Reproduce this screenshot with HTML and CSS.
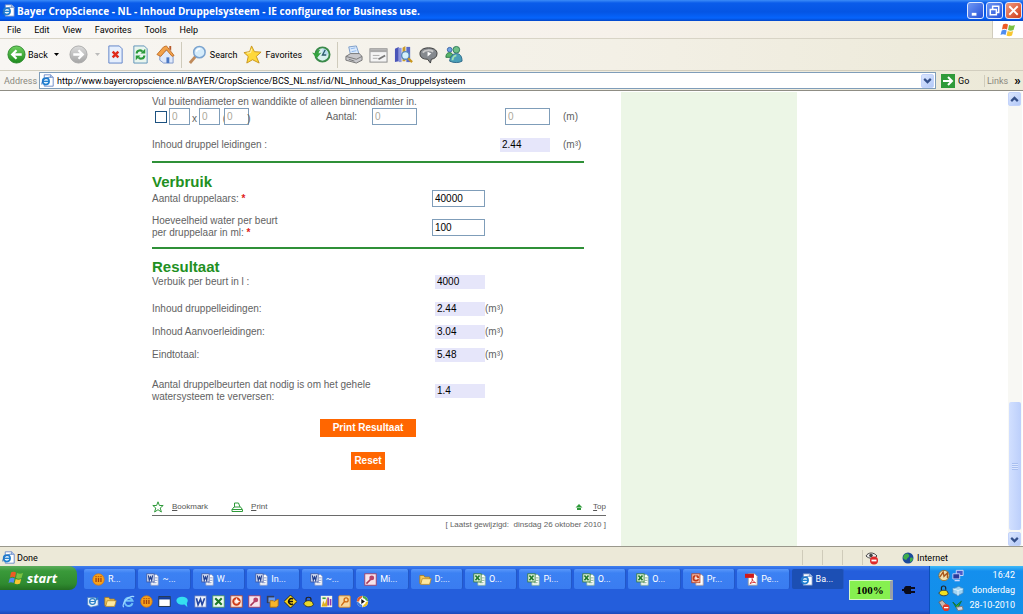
FILE: index.html
```html
<!DOCTYPE html>
<html lang="nl">
<head>
<meta charset="utf-8">
<title>Bayer CropScience - NL - Inhoud Druppelsysteem</title>
<link rel="stylesheet" href="styles.css">
</head>
<body>
<svg class="defs" aria-hidden="true">
  <defs>
    <linearGradient id="gGreen" x1="0" y1="0" x2="0" y2="1"><stop offset="0" stop-color="#6fd060"/><stop offset="1" stop-color="#1c8a1c"/></linearGradient>
    <linearGradient id="gGrey" x1="0" y1="0" x2="0" y2="1"><stop offset="0" stop-color="#dcdcdc"/><stop offset="1" stop-color="#a4a4a4"/></linearGradient>
  </defs>
  <symbol id="ie" viewBox="0 0 16 16"><path d="M4 1h8l3 3v11H4z" fill="#fff" stroke="#5a7cc0"/><path d="M12 1v3h3" fill="#cfe0fa" stroke="#5a7cc0"/><circle cx="6" cy="9" r="4" fill="#e8f4ff" stroke="#1f7fd0" stroke-width="2"/><path d="M2 9h8" stroke="#1f7fd0" stroke-width="1.6"/><path d="M1 13C0 9 7 3 12 4" fill="none" stroke="#2a66b8"/></symbol>
  <symbol id="word" viewBox="0 0 16 16"><path d="M6 2h7l2 2v11H6z" fill="#fff" stroke="#8a9cc8"/><path d="M8 12h5M11 6h3M11 9h3" stroke="#6f86c0"/><rect x="1" y="1" width="9" height="10" fill="#e6ecfa" stroke="#3a55a0"/><path d="M3 3l1 6 1.500-4 1.500 4 1-6" fill="none" stroke="#22408e" stroke-width="1.500"/></symbol>
  <symbol id="excel" viewBox="0 0 16 16"><path d="M6 2h7l2 2v11H6z" fill="#fff" stroke="#8ab89a"/><path d="M8 12h5M11 6h3M11 9h3" stroke="#6aa07a"/><rect x="1" y="1" width="9" height="10" fill="#dff0dc" stroke="#2f7a32"/><path d="M3 3l5 6M8 3l-5 6" stroke="#1f7a2a" stroke-width="2"/></symbol>
  <symbol id="ppt" viewBox="0 0 16 16"><path d="M6 2h7l2 2v11H6z" fill="#fff" stroke="#b8a09a"/><rect x="1" y="1" width="10" height="11" fill="#f3b9a4" stroke="#b84020"/><circle cx="6" cy="6.500" r="3" fill="none" stroke="#c23a18" stroke-width="2"/><path d="M6 3v4h4" stroke="#fff" fill="none"/></symbol>
  <symbol id="access" viewBox="0 0 16 16"><rect x="1" y="1" width="14" height="14" fill="#f6e4ec" stroke="#a8385a"/><circle cx="9.500" cy="6" r="3" fill="#b8426a"/><path d="M8 8l-5 5" stroke="#a8385a" stroke-width="2"/></symbol>
  <symbol id="folder" viewBox="0 0 16 16"><path d="M1 3h5l1 2h6v8H1z" fill="#f4c95a" stroke="#a87a20"/><path d="M4 7h11l-2 7H2z" fill="#ffe9a0" stroke="#b88a2a"/></symbol>
  <symbol id="pdf" viewBox="0 0 16 16"><path d="M4 1h8l3 3v11H4z" fill="#fff" stroke="#999"/><path d="M0 1h11v5H0z" fill="#d01818"/><path d="M6 13c2-1 4-5 3-6s-1 2 4 5c-2-1-5 0-7 1z" fill="none" stroke="#d01818"/></symbol>
  <symbol id="notes" viewBox="0 0 16 16"><circle cx="8" cy="8" r="7" fill="#f7a21c" stroke="#d9780c"/><path d="M5 6v5M8 6v5M11 6v5" stroke="#a3410a" stroke-width="1.600"/><path d="M4 4.500h2M7 4.500h2M10 4.500h2" stroke="#a3410a"/></symbol>
  <symbol id="flag" viewBox="0 0 16 16"><path d="M3 2.500C5 1 7 2 8 2.500L7 7.500C5 6.500 3.500 6.500 2 7.500z" fill="#ee5a24"/><path d="M9 3c2 1 4 1 6 0l-1.500 5c-2 1-4 1-5.500 0z" fill="#7cc142"/><path d="M1.700 8.500c2-1 3.500-1 5 0L5.500 13C4 12 2 12 .5 13z" fill="#4f8df0"/><path d="M7.700 9c2 1 3.700 1 5.500 0L12 13.500c-2 1-4 1-5.500 0z" fill="#f8c630"/></symbol>
</svg>

<header class="titlebar">
  <svg class="i13"><use href="#ie"/></svg>
  <h1 class="title">Bayer CropScience - NL - Inhoud Druppelsysteem - IE configured for Business use.</h1>
  <button class="win" aria-label="Minimaliseren"><svg viewBox="0 0 16 16"><path d="M4 12h5" stroke="#fff" stroke-width="3"/></svg></button>
  <button class="win" aria-label="Herstellen"><svg viewBox="0 0 16 16"><path d="M6 6V3.500h6.500V10H10M3.500 7H10v5.500H3.500z" fill="none" stroke="#fff" stroke-width="1.600"/></svg></button>
  <button class="win win-close" aria-label="Sluiten"><svg viewBox="0 0 16 16"><path d="M3.500 3.500l9 9M12.500 3.500l-9 9" stroke="#fff" stroke-width="2"/></svg></button>
</header>

<nav class="menubar">
  <button>File</button><button>Edit</button><button>View</button><button>Favorites</button><button>Tools</button><button>Help</button>
  <span class="throbber"><svg class="i16"><use href="#flag"/></svg></span>
</nav>

<div class="toolbar">
  <button class="tool back"><svg class="i20" viewBox="0 0 20 20"><circle cx="10" cy="10" r="9" fill="url(#gGreen)" stroke="#2b8a2b"/><path d="M15.500 10H6M10 5.500L5.500 10l4.500 4.500" fill="none" stroke="#fff" stroke-width="2.400"/></svg>Back<svg class="caret" viewBox="0 0 5 3"><path d="M0 0h5L2.500 3z" fill="#000"/></svg></button>
  <button class="tool forward" aria-label="Forward"><svg class="i20" viewBox="0 0 20 20"><circle cx="10" cy="10" r="9" fill="url(#gGrey)" stroke="#aaa"/><path d="M4.500 10H14M10 5.500l4.500 4.500-4.500 4.500" fill="none" stroke="#fff" stroke-width="2.400"/></svg><svg class="caret" viewBox="0 0 5 3"><path d="M0 0h5L2.500 3z" fill="#bbb"/></svg></button>
  <button class="tool" aria-label="Stop"><svg class="i20" viewBox="0 0 20 20"><path d="M3 1h11l3 3v15H3z" fill="#e6effd" stroke="#5f83c8"/><path d="M7 7l6 6M13 7l-6 6" stroke="#e02a1c" stroke-width="2.600"/></svg></button>
  <button class="tool" aria-label="Refresh"><svg class="i20" viewBox="0 0 20 20"><path d="M3 1h11l3 3v15H3z" fill="#e9f5ee" stroke="#5f93b8"/><path d="M6 9c0-4 5-4 6-2M14 11c0 4-5 4-6 2" fill="none" stroke="#2a9a3a" stroke-width="2.200"/><path d="M10 9h5V4zM10 11H5v5z" fill="#2a9a3a"/></svg></button>
  <button class="tool" aria-label="Home"><svg class="i20" viewBox="0 0 20 20"><path d="M4 10l8-5 6 6v8H8l-4-3z" fill="#dfe9fb" stroke="#7d97c9"/><path d="M1 10L8 2l3-1 8 10-2 1-6-7-6 7z" fill="#f2a24a" stroke="#c0702a"/><path d="M14 1h2v5l-2-2z" fill="#b85a2a"/><path d="M11 13h3v6h-3z" fill="#4a77c4"/></svg></button>
  <span class="sep"></span>
  <button class="tool"><svg class="i20" viewBox="0 0 20 20"><path d="M8 12l-6 7" stroke="#c08a5a" stroke-width="3"/><circle cx="12" cy="7.500" r="6" fill="#d5ecfb" stroke="#7aa3cf" stroke-width="1.600"/><path d="M9 7c0-2 2-3 4-3" stroke="#fff" stroke-width="1.500" fill="none"/></svg>Search</button>
  <button class="tool fav"><svg class="i20" viewBox="0 0 20 20"><path d="M9 1l3 6 7 .5-5 4.500 3 7-7-3.500L4 19l1.500-7L1 8l6-1z" fill="#ffd83a" stroke="#c8961c"/><path d="M9 4l-1 4-4 .5" fill="none" stroke="#fff6b8"/></svg>Favorites</button>
  <button class="tool" aria-label="History"><svg class="i20" viewBox="0 0 20 20"><circle cx="11" cy="10" r="7.500" fill="#d8f0ee" stroke="#3a8a4a" stroke-width="2"/><path d="M11 10V4a6 6 0 0 1 6 6z" fill="#b8dcf0"/><path d="M14 5l-3 5.500h4" stroke="#2a5a6a" fill="none" stroke-width="1.400"/><path d="M0 8l5 6 5-6-3 1c0-2 1-3 2-4-3 0-5 2-5 4z" fill="#35a33f"/></svg></button>
  <span class="sep"></span>
  <button class="tool" aria-label="Print"><svg class="i20" viewBox="0 0 20 20"><path d="M5 2l8-1 3 9-9 1z" fill="#dcebfd" stroke="#7a9cc8"/><path d="M2 12l5-3h9l3 3v4l-6 3-11-3z" fill="#c8c8cc" stroke="#777"/><path d="M2 12l11 3 6-3M5 15l6 2" fill="none" stroke="#777"/><path d="M7 4l5-1M8 7l5-1" stroke="#8ab4ea"/></svg></button>
  <button class="tool" aria-label="Edit page"><svg class="i20" viewBox="0 0 20 20"><rect x="1" y="4" width="18" height="14" fill="#f4f4f4" stroke="#8a8a8a"/><path d="M1 6h18" stroke="#aaa" stroke-width="3"/><path d="M4 11h7M4 14h5" stroke="#aaa"/><path d="M10 15l7-4" stroke="#777" stroke-width="2"/></svg></button>
  <button class="tool" aria-label="Research"><svg class="i20" viewBox="0 0 20 20"><path d="M1 4l4-2v15l-4 1z" fill="#4a55b8"/><path d="M5 3h3v15H5z" fill="#8a94e0"/><path d="M9 3l3-2v16H9z" fill="#c89a2a"/><path d="M13 2h4v16h-4z" fill="#5a6cc8"/><circle cx="12" cy="11" r="4" fill="#d5f0fb" stroke="#5a8aba" stroke-width="1.500"/><path d="M15 14l4 4" stroke="#c8961c" stroke-width="2.400"/></svg></button>
  <button class="tool" aria-label="Discuss"><svg class="i20" viewBox="0 0 20 20"><path d="M10 3c5 0 9 2 9 6S16 14.500 13 15l-1 4-3-4C4 15 1 13 1 9s4-6 9-6z" fill="#85898e" stroke="#3c3c3c"/><path d="M4 8c2-3 8-3 11-1" stroke="#c8c8c8" stroke-width="2" fill="none"/><path d="M9 7v5l4-3z" fill="#fff"/></svg></button>
  <button class="tool" aria-label="Messenger"><svg class="i20" viewBox="0 0 20 20"><circle cx="6" cy="5" r="2.500" fill="#6fa3e0" stroke="#3a62a8"/><path d="M2 13c0-4 2-5 4-5s4 2 4 5z" fill="#58b468" stroke="#2f7a4a"/><circle cx="13" cy="5" r="3.500" fill="#6fc088" stroke="#2f7a5a"/><path d="M6 17c0-4 3-8 7-8s6 3 6 8c-3 2-9 2-13 0z" fill="#4a9fb8" stroke="#2f6a8a"/><path d="M9 16c0-3 2-5 4-5" stroke="#9fe0b0" stroke-width="2" fill="none"/></svg></button>
</div>

<form class="addressbar">
  <label for="url">Address</label>
  <div class="urlbox"><svg class="i13"><use href="#ie"/></svg><input id="url" type="text" value="http://www.bayercropscience.nl/BAYER/CropScience/BCS_NL.nsf/id/NL_Inhoud_Kas_Druppelsysteem"><button type="button" class="xpbtn" aria-label="Adressen"><svg viewBox="0 0 10 10"><path d="M2 3.500L5 6.500l3-3" fill="none" stroke="#35508a" stroke-width="2"/></svg></button></div>
  <button type="button" class="go"><svg class="i14" viewBox="0 0 14 14"><rect width="14" height="14" fill="#2f9a3a"/><path d="M2 7h9M7 3l4 4-4 4" stroke="#fff" stroke-width="2" fill="none"/></svg>Go</button>
  <button type="button" class="links">Links <b>»</b></button>
</form>

<div class="viewport">
  <main class="page">
    <form class="form">
      <p class="hint">Vul buitendiameter en wanddikte of alleen binnendiamter in.</p>
      <div class="pipe">
        <span class="dims"><input type="checkbox" aria-label="Leiding"><input class="s" type="text" value="0" disabled aria-label="Buitendiameter"><i>x</i><input class="s" type="text" value="0" disabled aria-label="Wanddikte"><i>(</i><input class="m" type="text" value="0" disabled aria-label="Binnendiameter"><i>)</i></span>
        <label for="aantal">Aantal:</label><input id="aantal" type="text" value="0" disabled>
        <input class="len" type="text" value="0" disabled aria-label="Lengte"><span>(m)</span>
      </div>
      <div class="sum"><label for="leid">Inhoud druppel leidingen :</label><output id="leid">2.44</output><span>(m³)</span></div>

      <section>
        <h2>Verbruik</h2>
        <div class="row"><label for="dr">Aantal druppelaars: <em>*</em></label><input id="dr" type="text" value="40000"></div>
        <div class="row two"><label for="ml">Hoeveelheid water per beurt<br>per druppelaar in ml: <em>*</em></label><input id="ml" type="text" value="100"></div>
      </section>

      <section class="result">
        <h2>Resultaat</h2>
        <div class="row first"><label for="r1">Verbuik per beurt in l :</label><output id="r1">4000</output></div>
        <div class="row"><label for="r2">Inhoud druppelleidingen:</label><output id="r2">2.44</output><span>(m³)</span></div>
        <div class="row"><label for="r3">Inhoud Aanvoerleidingen:</label><output id="r3">3.04</output><span>(m³)</span></div>
        <div class="row"><label for="r4">Eindtotaal:</label><output id="r4">5.48</output><span>(m³)</span></div>
        <div class="row last"><label for="r5">Aantal druppelbeurten dat nodig is om het gehele<br>watersysteem te verversen:</label><output id="r5">1.4</output></div>
      </section>
      <div class="actions"><button type="button" class="wide">Print Resultaat</button><button type="reset">Reset</button></div>
    </form>
    <footer class="foot">
      <div class="footlinks">
        <a href="#"><svg viewBox="0 0 12 12"><path d="M6 .8L7.400 4.500h3.800L8.200 7l1.200 4L6 8.700 2.600 11l1.200-4L.8 4.500h3.800z" fill="none" stroke="#2f9a3a"/></svg><span><u>B</u>ookmark</span></a>
        <a href="#"><svg viewBox="0 0 12 12"><path d="M3.500 6V2h4l1.500 4M1 8.500L3 6h6.500l2 2.500v2H1zM1 8.500h10" fill="none" stroke="#2f9a3a"/></svg><span><u>P</u>rint</span></a>
        <a href="#" class="top"><svg viewBox="0 0 12 12"><path d="M6 3l3.500 3.500h-7zM4 7h4v2H4z" fill="#2f9a3a"/></svg><span><u>T</u>op</span></a>
      </div>
      <p>[ Laatst gewijzigd:&nbsp; dinsdag 26 oktober 2010 ]</p>
    </footer>
  </main>
  <aside class="band"></aside>
  <div class="scroll">
    <button class="xpbtn" aria-label="Omhoog"><svg viewBox="0 0 10 10"><path d="M2 6.500L5 3.500l3 3" fill="none" stroke="#35508a" stroke-width="2"/></svg></button>
    <div class="thumb"><span></span></div>
    <button class="xpbtn" aria-label="Omlaag"><svg viewBox="0 0 10 10"><path d="M2 3.500L5 6.500l3-3" fill="none" stroke="#35508a" stroke-width="2"/></svg></button>
  </div>
</div>

<div class="status">
  <svg class="i13"><use href="#ie"/></svg><span class="done">Done</span>
  <span class="cell"></span><span class="cell"></span><span class="cell"></span>
  <span class="cell eye"><svg class="i14" viewBox="0 0 14 14"><path d="M1 5c2-4 8-4 11 0-3 3-8 3-11 0z" fill="#eee" stroke="#444"/><circle cx="6" cy="4.500" r="1.800" fill="#444"/><circle cx="9" cy="9.500" r="4" fill="#e02a2a"/><path d="M6.500 9.500h5" stroke="#fff" stroke-width="1.800"/></svg></span>
  <span class="cell zone"><svg class="i12" viewBox="0 0 12 12"><circle cx="6" cy="6" r="5.500" fill="#1c4a9a"/><path d="M2 3c2-2 4-2 5 0s-1 2-2 4-3 0-4-1zM8 6c2-1 3 0 3 1s-2 3-3 3z" fill="#3fae4a"/></svg>Internet</span>
</div>

<div class="taskbar">
  <button class="start"><svg class="i16"><use href="#flag"/></svg>start</button>
  <div class="middle">
    <div class="tasks">
      <button><svg><use href="#notes"/></svg>R...</button>
      <button><svg><use href="#word"/></svg>~...</button>
      <button><svg><use href="#word"/></svg>W...</button>
      <button><svg><use href="#word"/></svg>In...</button>
      <button><svg><use href="#word"/></svg>~...</button>
      <button><svg><use href="#access"/></svg>Mi...</button>
      <button><svg><use href="#folder"/></svg>D:...</button>
      <button><svg><use href="#excel"/></svg>O...</button>
      <button><svg><use href="#excel"/></svg>Pi...</button>
      <button><svg><use href="#excel"/></svg>O...</button>
      <button><svg><use href="#excel"/></svg>O...</button>
      <button><svg><use href="#ppt"/></svg>Pr...</button>
      <button><svg><use href="#pdf"/></svg>Pe...</button>
      <button class="on"><svg><use href="#ie"/></svg>Ba...</button>
    </div>
    <div class="quick">
      <svg viewBox="0 0 16 16"><path d="M2 3h9l4 3v7l-9 2-4-3z" fill="#e8f2fc" stroke="#4a80c0"/><circle cx="8" cy="8" r="3.500" fill="none" stroke="#2a80c8" stroke-width="1.600"/><path d="M5 8h6l4-5" stroke="#2a80c8" stroke-width="1.500" fill="none"/></svg>
      <svg><use href="#folder"/></svg>
      <svg viewBox="0 0 16 16"><path d="M13 10a5 5 0 1 1 0-3H5" fill="none" stroke="#6fc0f8" stroke-width="2.400"/><path d="M2 15C-1 10 9 0 15 2" fill="none" stroke="#9fd8ff" stroke-width="1.400"/></svg>
      <svg><use href="#notes"/></svg>
      <svg viewBox="0 0 16 16"><rect x="1" y="2" width="14" height="12" fill="#fff" stroke="#123"/><path d="M1 4h14" stroke="#123c9a" stroke-width="3"/></svg>
      <svg viewBox="0 0 16 16"><ellipse cx="7.500" cy="7" rx="7" ry="5" fill="#35e0f0"/><path d="M9 10l5 5-1-7z" fill="#35e0f0"/></svg>
      <svg viewBox="0 0 16 16"><rect x="1" y="1" width="14" height="14" fill="#eef3fd" stroke="#5470b8"/><path d="M3 4l2 8 3-7 2 7 3-8" fill="none" stroke="#2345a0" stroke-width="2"/></svg>
      <svg viewBox="0 0 16 16"><rect x="1" y="1" width="14" height="14" fill="#eefaf0" stroke="#4a9a5a"/><path d="M4 4l8 8M12 4l-8 8" stroke="#1f7a2a" stroke-width="2.600"/></svg>
      <svg viewBox="0 0 16 16"><rect x="1" y="1" width="14" height="14" fill="#fbe6dc" stroke="#c04a28"/><circle cx="8" cy="8" r="4" fill="none" stroke="#cf3c18" stroke-width="2.400"/><path d="M8 4v4h4" stroke="#fff" fill="none"/></svg>
      <svg><use href="#access"/></svg>
      <svg viewBox="0 0 16 16"><path d="M1 1h9v9H1z" fill="#333c58"/><path d="M3 3h8v6H3z" fill="#6a9af0"/><path d="M5 7h4l1 1 5-3v8l-2 2H5z" fill="#f7b52c" stroke="#a86a10"/></svg>
      <svg viewBox="0 0 16 16"><path d="M8 0l8 8-8 8-8-8z" fill="#f8d21c" stroke="#111"/><path d="M11 5a3.500 3.500 0 1 0 0 6M5 8h6" fill="none" stroke="#111" stroke-width="1.800"/></svg>
      <svg viewBox="0 0 16 16"><path d="M5 8V5c0-3 6-3 6 0v2" fill="none" stroke="#222" stroke-width="1.500"/><path d="M2 11c2-5 8-5 11-2l1 3c-2 3-9 4-12-1z" fill="#e8d82a" stroke="#222"/></svg>
      <svg viewBox="0 0 16 16"><rect x="1" y="1" width="14" height="14" fill="#f4f4e8"/><path d="M2 14l2-7 2 4 3-9v12z" fill="#e0b020"/><path d="M10 3v10M13 5v8" stroke="#8a3ab0" stroke-width="2"/><path d="M3 4h4" stroke="#3aa040" stroke-width="2"/></svg>
      <svg viewBox="0 0 16 16"><rect x="1" y="1" width="14" height="14" rx="1" fill="#f6d8a0" stroke="#e08a1c"/><circle cx="10" cy="6" r="2.500" fill="none" stroke="#d06a10" stroke-width="1.600"/><path d="M8 8l-4 5" stroke="#d06a10" stroke-width="1.600"/></svg>
      <svg viewBox="0 0 16 16"><circle cx="8" cy="8" r="7" fill="#f4f4f4"/><path d="M8 1a7 7 0 0 0-7 7h4z" fill="#e0602a"/><path d="M1 8a7 7 0 0 0 7 7l-1-4z" fill="#3a7ae0"/><path d="M8 15a7 7 0 0 0 7-7l-4 1z" fill="#e8c020"/><path d="M15 8a7 7 0 0 0-7-7l1 4z" fill="#48a848"/><circle cx="8" cy="8" r="4" fill="#fff"/><path d="M6.500 5v6l4.500-3z" fill="#111"/></svg>
    </div>
  </div>
  <div class="power"><span class="battery">100%</span><svg viewBox="0 0 14 12"><path d="M4 2h5v8H4C1 9 1 3 4 2z" fill="#0a0a1a"/><path d="M8 4h5M8 8h5M0 6h3" stroke="#0a0a1a" stroke-width="2"/></svg></div>
  <div class="tray">
    <div class="trayicons">
      <svg viewBox="0 0 14 14"><circle cx="7" cy="7" r="6" fill="#f2e2b0" stroke="#8a6a2a"/><path d="M2 9l4-6 1 5 4-4v6" fill="none" stroke="#a8581c" stroke-width="1.600"/></svg>
      <svg viewBox="0 0 14 14"><path d="M5 1h8v6H5z" fill="#4a5ac8" stroke="#dce4ff"/><path d="M1 5h8v6H1z" fill="#2a3a9a" stroke="#cfd8ff"/><path d="M3 13h6" stroke="#cfd8ff" stroke-width="1.500"/></svg>
      <svg viewBox="0 0 14 14"><path d="M4 7V4c0-3 5-3 5 0v2" fill="none" stroke="#222" stroke-width="1.400"/><path d="M1 10c2-4 7-4 10-2l1 3c-2 3-9 3-11-1z" fill="#f0e020" stroke="#333"/></svg>
      <svg viewBox="0 0 14 14"><path d="M1 5l7-3 5 3v5l-6 3-6-3z" fill="#9fd4f4" stroke="#4a8ac0"/><path d="M1 5l6 2 6-2M7 7v6" stroke="#e8f8ff" fill="none"/></svg>
      <svg viewBox="0 0 14 14"><path d="M1 3l4-2 5 5-4 5z" fill="#c8b8b0" stroke="#6a5a5a"/><circle cx="9.500" cy="9.500" r="4" fill="#e03a2a"/><path d="M7 9.500h5" stroke="#fff" stroke-width="1.500"/></svg>
      <svg viewBox="0 0 14 14"><path d="M1 3l4 4 6-5-5 9z" fill="#30b040" stroke="#0f6a2a"/><path d="M5 9l7-1 1 4-6 1z" fill="#d8d8e0" stroke="#777"/></svg>
    </div>
    <p class="clock">16:42<br>donderdag<br>28-10-2010</p>
  </div>
</div>
</body>
</html>
```
FILE: styles.css
```css
* { box-sizing: border-box; margin: 0; padding: 0; }
body { height: 100vh; display: flex; flex-direction: column; overflow: hidden; background: #fff; color: #000; font-family: Roboto, "Noto Sans", sans-serif; font-size: 9px; line-height: 12px; }
button, input { font: inherit; color: inherit; }
button { background: none; border: 0; white-space: nowrap; }
svg { flex: none; display: block; }
.defs { position: absolute; width: 0; height: 0; }
.i12 { width: 12px; height: 12px; }
.i13 { width: 13px; height: 13px; }
.i14 { width: 14px; height: 14px; }
.i16 { width: 16px; height: 16px; }
.i20 { width: 19px; height: 19px; }

.titlebar { flex: none; height: 21px; display: flex; align-items: center; gap: 2px; padding: 0 1px 0 2px; background: linear-gradient(#3c8cf8 0, #0a5cea 3px, #0555e4 12px, #0664fc 18px, #0346c8); }
.title { flex: 1; color: #fff; font: bold 10px/14px "Open Sans", sans-serif; white-space: nowrap; }
.win { width: 17px; height: 17px; border: 1px solid #dfe9ff; border-radius: 3px; background: linear-gradient(135deg, #6f98f4, #2450d8); }
.win-close { background: linear-gradient(135deg, #f09a80, #d03c18); }

.menubar { flex: none; height: 18px; display: flex; align-items: center; padding-left: 7px; gap: 13px; border-bottom: 1px solid #d8d4c6; background: linear-gradient(90deg, #f9f8f6, #f6f1ea 60%, #ece9d8); }
.throbber { margin-left: auto; width: 31px; height: 17px; display: grid; place-items: center; background: #fff; border-left: 1px solid #d0ccbc; }

.toolbar { flex: none; height: 32px; display: flex; align-items: center; gap: 6px; padding-left: 7px; border-bottom: 1px solid #d2cebf; background: linear-gradient(90deg, #f8f6f3, #f3f0e6 60%, #ece9d8); }
.tool { display: flex; align-items: center; gap: 3px; }
.back { gap: 2px; }
.caret { width: 5px; height: 3px; margin-left: 4px; }
.forward { margin-left: 4px; }
.fav { margin-right: 4px; }
.sep { width: 1px; height: 26px; background: #cfcbbc; }

.addressbar { flex: none; height: 20px; display: flex; align-items: center; padding-left: 4px; background: linear-gradient(90deg, #f6f4f0, #ece9d8); border-bottom: 1px solid #8f8d84; }
.addressbar label { width: 35px; color: #8a887e; }
.urlbox { flex: 1; height: 17px; display: flex; align-items: center; gap: 3px; padding: 0 1px; background: #fff; border: 1px solid #7f9db9; }
.urlbox input { flex: 1; min-width: 0; border: 0; background: none; }
.xpbtn { width: 13px; height: 14px; border-radius: 2px; background: linear-gradient(135deg, #dbe6fe, #b3c9f8); border: 1px solid #c3d3fb; }
.go { display: flex; align-items: center; gap: 3px; padding-left: 5px; width: 48px; }
.links { display: flex; align-items: center; gap: 6px; color: #8a887e; border-left: 1px solid #d0ccbc; width: 39px; padding-left: 2px; }
.links b { color: #000; font-size: 13px; }

.viewport { flex: 1; min-height: 0; display: flex; padding: 1px 1px 0 0; }
.page { width: 621px; padding: 3px 15px 0 152px; color: #626262; font: 10px/12px "Liberation Sans", Arial, sans-serif; overflow: hidden; }
.band { width: 176px; background: #ecf6e6; }
.scroll { margin-left: auto; width: 14px; display: flex; flex-direction: column; background: #f8f8f4; }
.thumb { height: 128px; margin: auto 1px 2px; border-radius: 2px; background: linear-gradient(90deg, #d2e0ff, #bccffb); display: grid; place-items: center; }
.thumb span { width: 6px; height: 7px; background: repeating-linear-gradient(#a8bff0 0 1px, #dbe6ff 1px 2px); }

.form { width: 432px; }
.form input[type="text"] { height: 17px; width: 53px; padding: 0 2px; border: 1px solid #7f9db9; background: #fff; color: #000; }
.form input[type="text"]:disabled { width: 45px; color: #aca899; }
.form input[type="text"].s:disabled { width: 21px; }
.form input[type="text"].m:disabled { width: 25px; }
.form i { font-style: normal; width: 9px; text-align: center; align-self: end; }
.form i + .m { margin-left: -5px; }
.form .m + i { width: 4px; margin-left: -2px; }
.form output { display: block; width: 50px; height: 14px; line-height: 14px; padding-left: 2px; background: #e6e6fa; color: #000; }
.hint { line-height: 13px; }
.pipe { display: grid; grid-template-columns: 174px 46px 133px 58px auto; align-items: center; }
.dims { display: flex; align-items: center; padding-left: 3px; }
.dims input[type="checkbox"] { appearance: none; width: 12px; height: 12px; margin: 0 2px 0 0; border: 1px solid #1c5180; background: #fff; }
.sum { display: grid; grid-template-columns: 348px 63px auto; align-items: center; padding: 13px 0 9px; }
section { border-top: 2px solid #2f9038; padding: 10px 0 8px; }
h2 { color: #229022; font: bold 15px/17px "Liberation Sans", Arial, sans-serif; }
.row { display: grid; grid-template-columns: 280px 53px auto; align-items: center; }
.two { margin-top: 8px; }
em { color: #e02020; font-style: normal; font-weight: bold; }
.result { padding: 9px 0 0; }
.result .row { grid-template-columns: 283px 50px auto; margin-bottom: 9px; }
.result .first { margin-bottom: 13px; }
.result .last { margin: 17px 0 16px; }
.actions { display: flex; flex-direction: column; align-items: center; gap: 15px; }
.actions button { height: 18px; padding: 0 3px; background: #ff6600; color: #fff; font-weight: bold; }
.actions .wide { padding: 0 13px; }
.foot { margin-top: 28px; font-size: 8px; line-height: 10px; }
.footlinks { display: flex; gap: 23px; height: 18px; border-bottom: 1px solid #6a6a6a; }
.footlinks a { display: flex; gap: 8px; align-items: center; color: #555; text-decoration: none; }
.footlinks svg { width: 12px; height: 12px; }
.footlinks .top { margin-left: auto; }
.foot p { text-align: right; margin-top: 4px; }

.status { flex: none; height: 20px; display: flex; align-items: center; padding: 2px 2px 0; border-top: 1px solid #9a988c; background: #ece9d8; }
.done { flex: 1; padding-left: 2px; }
.cell { width: 20px; height: 15px; display: flex; align-items: center; border-left: 1px solid #cfcbba; }
.eye { width: 40px; padding-left: 2px; }
.zone { width: 119px; gap: 3px; border-left: 0; }

.taskbar { flex: none; height: 48px; display: flex; color: #fff; background: linear-gradient(#3f80f0 0, #245edc 5px, #245edc 44px, #1c48b8); }
.start { width: 77px; height: 24px; margin-right: 7px; display: flex; align-items: center; gap: 3px; padding-left: 8px; border-radius: 0 8px 8px 0; background: linear-gradient(#5cac5c, #3a9a3a 5px, #2f8a2f 18px, #226e22); font: italic bold 13px/16px "Open Sans", sans-serif; }
.middle { flex: 1; min-width: 0; }
.tasks { display: grid; grid-template-columns: repeat(14, 1fr); gap: 2px; padding-top: 3px; }
.tasks button { display: flex; align-items: center; gap: 3px; height: 20px; padding-left: 8px; border-radius: 2px; background: linear-gradient(#5a98fa, #3c81f3 4px, #3a7cf0); border-right: 1px solid #2358c8; }
.tasks .on { background: #1c4fb4; }
.tasks svg { width: 13px; height: 13px; }
.quick { display: flex; gap: 5px; padding: 6px 0 0 2px; }
.quick svg { width: 13px; height: 13px; }
.power { flex: none; display: flex; align-items: center; gap: 9px; padding-left: 5px; width: 85px; }
.battery { width: 44px; height: 20px; border: 1px solid #d8f8c8; border-right: 3px solid #9aa0a8; background: #86f050; color: #000; font: bold 11px/18px "Liberation Serif", serif; text-align: center; }
.power svg { width: 14px; height: 12px; }
.tray { flex: none; width: 94px; display: flex; padding: 2px 8px 0; background: linear-gradient(#3fbaf8, #148fee 5px, #1290e8); border-left: 1px solid #0a50b8; }
.trayicons { display: grid; grid-template-columns: 12px 12px; gap: 2px; align-content: start; padding-top: 1px; }
.trayicons svg { width: 12px; height: 13px; }
.clock { flex: 1; text-align: right; line-height: 15px; white-space: nowrap; }
```
